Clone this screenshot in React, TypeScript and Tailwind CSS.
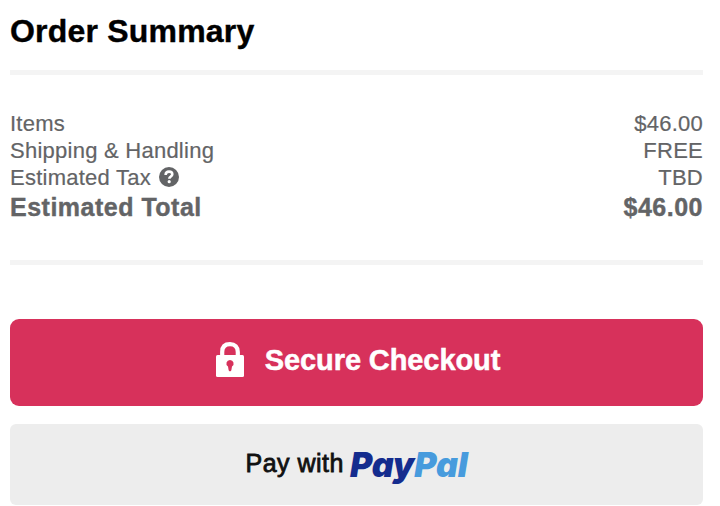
import { ReactNode } from 'react'
import { clsx } from 'clsx'

interface SummaryRowProps {
  label: ReactNode
  value: string
  total?: boolean
}

function HelpIcon() {
  return (
    <svg viewBox="0 0 20 20" className="-mt-px h-5 w-5 shrink-0" aria-hidden="true">
      <circle cx="10" cy="10" r="10" fill="currentColor" />
      <path d="M6.6 8C6.7 5.6 8 4.6 10 4.6c2 0 3.3 1 3.3 2.6 0 2.2-3 2.3-3 4.5" fill="none" stroke="white" strokeWidth="2.6" />
      <circle cx="10.2" cy="14.7" r="1.6" fill="white" />
    </svg>
  )
}

function LockIcon() {
  return (
    <svg viewBox="0 0 28 36" className="h-9 w-7 shrink-0" aria-hidden="true">
      <path d="M6.2 15V10C6.2 5 9 2.2 14 2.2s7.8 2.8 7.8 7.8v5" fill="none" stroke="white" strokeWidth="4.2" />
      <rect y="13" width="28" height="22" rx="1.5" fill="white" />
      <path d="M14 18a3.6 3.6 0 0 0-2 6.6l.6 3.4c.3 1.7 2.5 1.7 2.8 0l.6-3.4A3.6 3.6 0 0 0 14 18z" fill="#d7315b" />
    </svg>
  )
}

function SummaryRow({ label, value, total }: SummaryRowProps) {
  return (
    <div
      className={clsx(
        'flex items-center justify-between',
        total
          ? 'h-[33px] text-[25px] font-bold tracking-[0.5px] [-webkit-text-stroke:0.4px_#636466]'
          : 'h-[27px] text-[22px] tracking-[0.25px] [-webkit-text-stroke:0.2px_#636466]'
      )}
    >
      <span className="flex items-center gap-2">{label}</span>
      <span>{value}</span>
    </div>
  )
}

export default function App() {
  return (
    <main className="h-[506px] overflow-hidden bg-white pl-2.5 pr-[17px] font-['Liberation_Sans',Arial,sans-serif]">
      <h1 className="h-[70px] pt-[11px] text-[32px] font-bold leading-10 tracking-[0.2px] text-black [-webkit-text-stroke:0.4px_#000000]">
        Order Summary
      </h1>

      <section className="h-[195px] border-y-5 border-[#f4f4f4] pt-[35px] text-[#636466]">
        <SummaryRow label="Items" value="$46.00" />
        <SummaryRow label="Shipping &amp; Handling" value="FREE" />
        <SummaryRow label={<>Estimated Tax <HelpIcon /></>} value="TBD" />
        <SummaryRow label="Estimated Total" value="$46.00" total />
      </section>

      <button className="mt-[54px] flex h-[87px] w-full items-center justify-center gap-[21px] rounded-[9px] bg-[#d7315b] pb-[5px] pl-[3px] text-[29px] font-bold tracking-[-0.1px] text-white">
        <LockIcon />
        <span className="pt-px [-webkit-text-stroke:0.5px_#ffffff]">Secure Checkout</span>
      </button>

      <button className="mt-[18px] flex h-[81px] w-full items-center justify-center gap-[6px] rounded-[6px] bg-[#ededed] pb-0.5 text-[25px] tracking-[0.5px] text-[#111111]">
        <span className="[-webkit-text-stroke:0.8px_#111111]">Pay with</span>
        <span className="pt-0.5 font-['Inter',sans-serif] text-[34px] font-black italic leading-none tracking-[-0.2px] text-[#142c8e] [font-feature-settings:'cv11']">
          Pay<span className="text-[#479bdd]">Pal</span>
        </span>
      </button>
    </main>
  )
}
